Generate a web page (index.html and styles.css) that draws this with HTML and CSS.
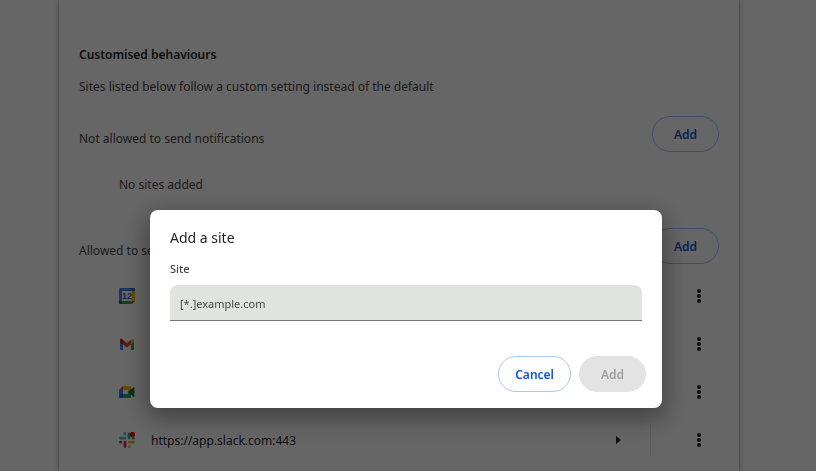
FILE: index.html
```html
<!DOCTYPE html>
<html lang="en-GB">
<head>
  <meta charset="UTF-8">
  <meta name="viewport" content="width=device-width, initial-scale=1.0">
  <title>Settings - Notifications</title>
  <link rel="stylesheet" href="styles.css">
</head>
<body>
  <main class="page">
    <section class="card">
      <h2>Customised behaviours</h2>
      <p class="intro">Sites listed below follow a custom setting instead of the default</p>

      <div class="list-header">
        <h3>Not allowed to send notifications</h3>
        <button class="btn" type="button">Add</button>
      </div>
      <p class="empty">No sites added</p>

      <div class="list-header">
        <h3>Allowed to send notifications</h3>
        <button class="btn" type="button">Add</button>
      </div>
      <ul class="sites">
        <li>
          <svg class="favicon" viewBox="0 0 16 16">
            <path fill="#4285f4" d="M1 0h12v3H3v10H0V1a1 1 0 0 1 1-1z"/>
            <path fill="#1967d2" d="M13 0h2a1 1 0 0 1 1 1v2h-3z"/>
            <path fill="#fbbc04" d="M13 3h3v10h-3z"/>
            <path fill="#34a853" d="M3 13h10v3H3z"/>
            <path fill="#188038" d="M0 13h3v3H1a1 1 0 0 1-1-1z"/>
            <path fill="#ea4335" d="M13 13h3l-3 3z"/>
            <path fill="#fff" d="M3 3h10v10H3z"/>
            <text x="8" y="11" class="day">12</text>
          </svg>
          <span class="url">https://calendar.google.com:443</span>
          <button class="arrow" type="button" aria-label="Site details"></button>
          <button class="more" type="button" aria-label="More actions"><i></i><i></i><i></i></button>
        </li>
        <li>
          <svg class="favicon" viewBox="0 0 16 16">
            <path fill="#4285f4" d="M1 5l3 2v7H2a1 1 0 0 1-1-1z"/>
            <path fill="#34a853" d="M12 7l3-2v8a1 1 0 0 1-1 1h-2z"/>
            <path fill="#fbbc04" d="M12 4l1-1c1-.7 2 0 2 1v2l-3 2.500z"/>
            <path fill="#ea4335" d="M4 4l4 3 4-3v4.500l-4 3-4-3z"/>
            <path fill="#c5221f" d="M1 4c0-1 1-1.700 2-1l1 1v4.500L1 6z"/>
          </svg>
          <span class="url">https://mail.google.com:443</span>
          <button class="arrow" type="button" aria-label="Site details"></button>
          <button class="more" type="button" aria-label="More actions"><i></i><i></i><i></i></button>
        </li>
        <li>
          <svg class="favicon" viewBox="0 0 16 16">
            <path fill="#ea4335" d="M4 2v4H0z"/>
            <path fill="#4285f4" d="M0 6h4v4H0z"/>
            <path fill="#1967d2" d="M0 10h4v4H1a1 1 0 0 1-1-1z"/>
            <path fill="#fbbc04" d="M4 2h7a1 1 0 0 1 1 1v5L9 9V6H4z"/>
            <path fill="#34a853" d="M4 10h5V8h3v5a1 1 0 0 1-1 1H4z"/>
            <path fill="#fff" d="M4 6h5v4H4z"/>
            <path fill="#188038" d="M9 8l5-4.500c.6-.5 1.500-.2 1.500.5v8c0 .7-.9 1-1.500.5z"/>
          </svg>
          <span class="url">https://meet.google.com:443</span>
          <button class="arrow" type="button" aria-label="Site details"></button>
          <button class="more" type="button" aria-label="More actions"><i></i><i></i><i></i></button>
        </li>
        <li>
          <svg class="favicon" viewBox="0 0 16 16" fill="none" stroke-width="2.800" stroke-linecap="round">
            <path stroke="#36c5f0" d="M1.500 6.200h4.300M5.800 1.500v.5"/>
            <path stroke="#2eb67d" d="M10 2v4M14 6.200h.5"/>
            <path stroke="#ecb22e" d="M10.200 10.200h4.300M10.200 14.300v.2"/>
            <path stroke="#e01e5a" d="M6 10.200v4.300M1.500 10.200h.3"/>
            <circle cx="13.500" cy="2.500" r="2.600" fill="#f00018"/>
          </svg>
          <span class="url">https://app.slack.com:443</span>
          <button class="arrow" type="button" aria-label="Site details"></button>
          <button class="more" type="button" aria-label="More actions"><i></i><i></i><i></i></button>
        </li>
      </ul>
    </section>
  </main>

  <div class="backdrop">
    <form class="dialog" role="dialog" aria-labelledby="dialogTitle">
      <h1 id="dialogTitle">Add a site</h1>
      <div class="field">
        <label for="site">Site</label>
        <input type="text" id="site" placeholder="[*.]example.com">
      </div>
      <div class="dialog-actions">
        <button class="btn" type="button">Cancel</button>
        <button class="btn primary" type="submit" disabled>Add</button>
      </div>
    </form>
  </div>
</body>
</html>
```

FILE: styles.css
```css
:root {
  --text: #1f1f1f;
  --text-secondary: #474747;
  --blue: #0b57d0;
  --outline: #a8c7fa;
  --line: #e6e6e6;
}

* {
  box-sizing: border-box;
}

body {
  margin: 0;
  height: 100vh;
  overflow: hidden;
  background: #fff;
  color: var(--text);
  font: 12px/20px "Noto Sans", sans-serif;
}

h1, h2, h3, p, ul {
  margin: 0;
  padding: 0;
}

.page {
  padding-right: 18px;
}

.card {
  max-width: 680px;
  min-height: 100vh;
  margin: 0 auto;
  padding: 45px 20px 0;
  box-shadow: 0 0 2px rgba(0,0,0,0.4), 0 0 6px 1px rgba(0,0,0,0.15);
}

h2 {
  font-size: 12px;
  font-weight: 600;
}

.intro {
  margin-top: 12px;
  color: var(--text-secondary);
}

.list-header {
  display: flex;
  align-items: flex-start;
  justify-content: space-between;
  height: 52px;
  margin-top: 11px;
  padding-top: 8px;
}

h3 {
  margin-top: 13px;
  font-size: 12px;
  font-weight: 400;
  color: var(--text-secondary);
}

.empty {
  padding: 15px 40px 14px;
  color: var(--text-secondary);
}

.btn {
  min-width: 67px;
  height: 36px;
  padding: 1px 16px 0;
  border: 1px solid var(--outline);
  border-radius: 18px;
  background: #fff;
  color: var(--blue);
  font: inherit;
  font-weight: 600;
}

.btn.primary {
  border-color: #e3e3e3;
  background: #e3e3e3;
  color: #9e9e9e;
}

.sites {
  list-style: none;
}

.sites li {
  display: flex;
  align-items: center;
  height: 48px;
  padding-left: 40px;
}

.favicon {
  width: 16px;
  height: 16px;
  margin-right: 16px;
}

.day {
  font: bold 9px "Liberation Sans", sans-serif;
  text-anchor: middle;
  fill: #1967d2;
}

.url {
  flex: 1;
  padding-top: 2px;
}

.arrow {
  display: flex;
  align-items: center;
  justify-content: center;
  width: 64px;
  height: 32px;
  padding: 0;
  border: 0;
  border-right: 1px solid var(--line);
  background: none;
}

.arrow::before {
  content: "";
  border: 4px solid transparent;
  border-left: 5px solid var(--text);
  border-right: 0;
}

.more {
  display: flex;
  flex-direction: column;
  align-items: center;
  justify-content: center;
  gap: 1px;
  width: 36px;
  height: 36px;
  margin: 0 2px 0 30px;
  padding: 0;
  border: 0;
  background: none;
}

.more i {
  width: 4px;
  height: 4px;
  border-radius: 50%;
  background: var(--text);
}

.backdrop {
  position: fixed;
  inset: 0;
  display: flex;
  align-items: flex-start;
  justify-content: center;
  padding: 210px 4px 0 0;
  background: rgba(0,0,0,0.6);
}

.dialog {
  width: 512px;
  padding: 16px;
  border-radius: 8px;
  background: #fff;
  box-shadow: 0 8px 24px 4px rgba(0,0,0,0.35);
}

h1 {
  padding: 0 4px;
  font-size: 14px;
  font-weight: 400;
  line-height: 24px;
}

.field {
  margin: 9px 4px 35px;
}

label {
  display: block;
  margin-bottom: 6px;
  color: var(--text-secondary);
  font-size: 11px;
  font-weight: 500;
  line-height: 20px;
}

input {
  display: block;
  width: 100%;
  height: 36px;
  padding: 1px 10px 0;
  border: 0;
  border-bottom: 1px solid #747775;
  border-radius: 8px 8px 0 0;
  background: #e1e3e1;
  color: var(--text);
  font: inherit;
  font-size: 11px;
}

input::placeholder {
  color: var(--text-secondary);
}

.dialog-actions {
  display: flex;
  justify-content: flex-end;
  gap: 8px;
}
```
